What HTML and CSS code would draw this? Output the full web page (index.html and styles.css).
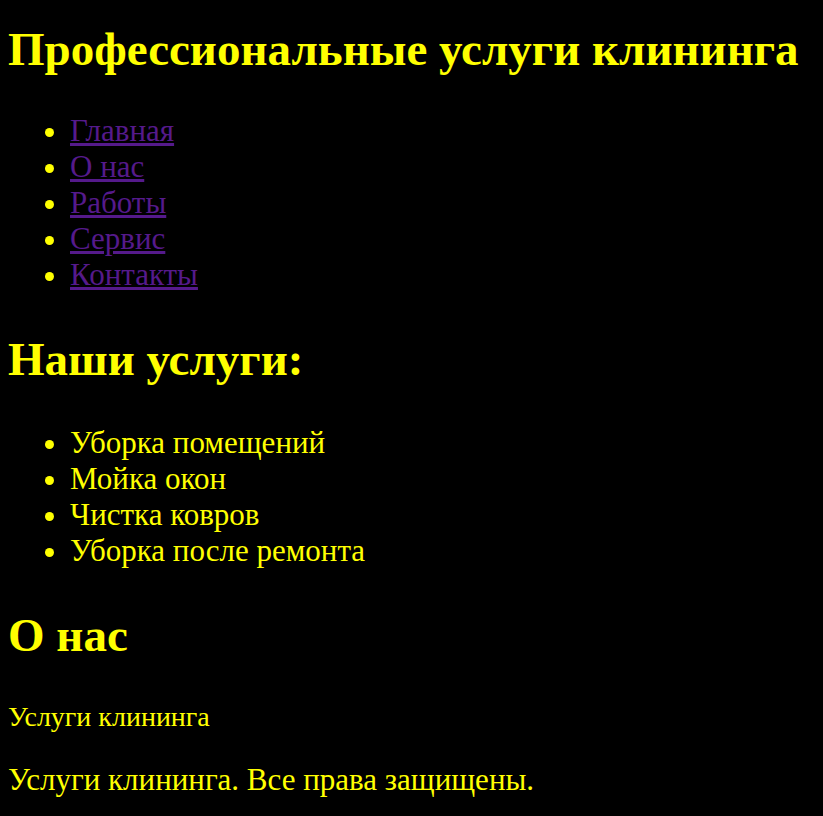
FILE: index.html
```html
<!DOCTYPE html>
<html lang="ru">
<head>
<meta charset="utf-8">
<title>Профессиональные услуги клининга</title>
<link rel="stylesheet" href="styles.css">
</head>
<body>
<header class="site-header">
  <h1 class="site-title">Профессиональные услуги клининга</h1>
  <nav class="main-nav">
    <ul class="nav-list">
      <li><a class="nav-link" href="#">Главная</a></li>
      <li><a class="nav-link" href="#">О нас</a></li>
      <li><a class="nav-link" href="#">Работы</a></li>
      <li><a class="nav-link" href="#">Сервис</a></li>
      <li><a class="nav-link" href="#">Контакты</a></li>
    </ul>
  </nav>
</header>
<section class="services">
  <h2 class="section-title">Наши услуги:</h2>
  <ul class="services-list">
    <li>Уборка помещений</li>
    <li>Мойка окон</li>
    <li>Чистка ковров</li>
    <li>Уборка после ремонта</li>
  </ul>
</section>
<section class="about">
  <h2 class="section-title">О нас</h2>
  <p class="about-text">Услуги клининга</p>
</section>
<footer class="site-footer">
  <p class="footer-text">Услуги клининга. Все права защищены.</p>
</footer>
</body>
</html>
```

FILE: styles.css
```css
html, body {
  background: #000;
}
body {
  margin: 8px;
  color: #ffff00;
  font-family: "Liberation Serif", "Times New Roman", serif;
  font-size: 31px;
}
.site-title {
  font-size: 47px;
  line-height: 54px;
  margin: 14px 0 37px;
}
.nav-list, .services-list {
  margin: 0;
  padding-left: 62px;
  line-height: 36px;
}
.nav-link {
  color: #551a8b;
}
.section-title {
  font-size: 47px;
  line-height: 54px;
  margin: 39px 0;
}
.about-text {
  font-size: 28px;
  margin: 39px 0 29px;
}
.footer-text {
  font-size: 31px;
  line-height: 36px;
  margin: 29px 0;
}
```
